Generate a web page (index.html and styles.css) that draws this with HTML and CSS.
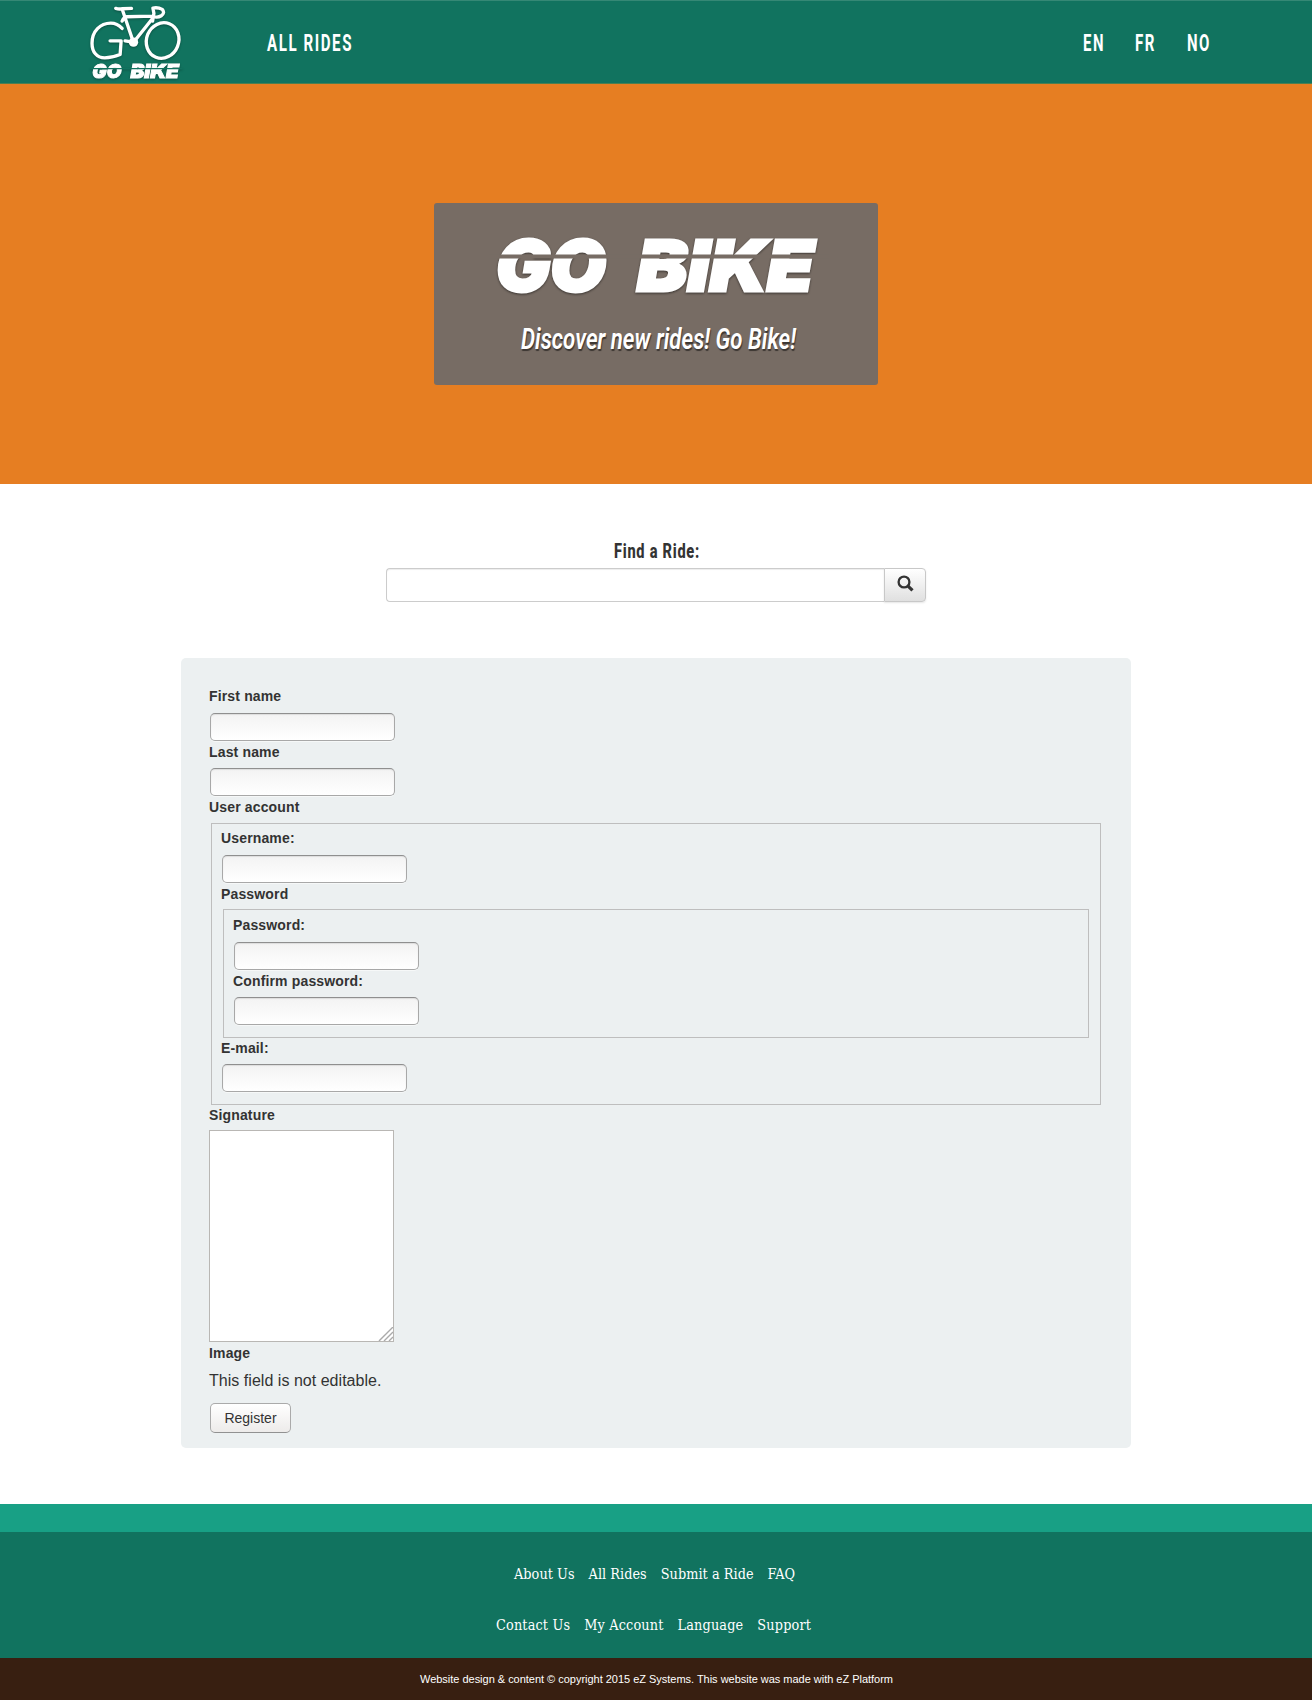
FILE: index.html
```html
<!DOCTYPE html>
<html lang="en">
<head>
<meta charset="utf-8">
<title>Go Bike</title>
<link rel="stylesheet" href="styles.css">
</head>
<body>
<header class="navbar">
  <a class="brand" aria-label="Go Bike">
    <svg class="logo" viewBox="50 10 290 230">
      <g class="logo-lines">
        <path d="M155 83C145 72 133 67 121 67C90 67 65 91 65 127C65 153 79 171 103 171C121 171 137 166 149 161L152 120L119 120"/>
        <ellipse cx="276" cy="119" rx="48" ry="54" transform="rotate(22 276 119)"/>
        <path d="M136 23Q145 26 156 24L183 23M155 25L188 122M155 61Q160 49 169 48L246 46M191 122L250 48M246 61L250 38L247 22Q262 19 275 26Q284 37 272 45Q264 50 256 49M164 120L183 123" />
      </g>
      <circle class="logo-fill" cx="189" cy="124" r="14"/>
      <g class="logo-word">
        <text x="66" y="230" textLength="87" lengthAdjust="spacingAndGlyphs">GO</text>
        <text x="180" y="230" textLength="145" lengthAdjust="spacingAndGlyphs">BIKE</text>
      </g>
      <path class="logo-cut" d="M60 203H335"/>
    </svg>
  </a>
  <nav class="main-nav"><a><svg class="cond" width="92" height="32"><text x="0" y="24" textLength="86" lengthAdjust="spacingAndGlyphs">ALL RIDES</text></svg></a></nav>
  <nav class="lang-nav">
    <a><svg class="cond" width="22" height="32"><text x="0" y="24" textLength="22" lengthAdjust="spacingAndGlyphs">EN</text></svg></a>
    <a><svg class="cond" width="22" height="32"><text x="0" y="24" textLength="21" lengthAdjust="spacingAndGlyphs">FR</text></svg></a>
    <a><svg class="cond" width="24" height="32"><text x="0" y="24" textLength="24" lengthAdjust="spacingAndGlyphs">NO</text></svg></a>
  </nav>
</header>

<section class="hero">
  <div class="hero-card">
    <svg class="hero-title" width="444" height="182">
      <g class="hero-word">
        <text x="62" y="87.500" textLength="110" lengthAdjust="spacingAndGlyphs">GO</text>
        <text x="203" y="87.500" textLength="177" lengthAdjust="spacingAndGlyphs">BIKE</text>
      </g>
      <path class="hero-cut" d="M55 53.5H395"/>
      <text class="hero-tag" x="87" y="146" textLength="275" lengthAdjust="spacingAndGlyphs">Discover new rides! Go Bike!</text>
    </svg>
  </div>
</section>

<main>
  <form class="search">
    <svg class="search-label" width="86" height="28"><text x="1" y="18" textLength="86" lengthAdjust="spacingAndGlyphs">Find a Ride:</text></svg>
    <div class="search-row">
      <input class="search-input" type="text">
      <button class="search-btn" type="button" aria-label="Search"><svg width="17" height="18" viewBox="0 0 16 17"><circle cx="6.6" cy="6.6" r="5.1"/><path d="M10.4 10.4L14.6 14.6"/></svg></button>
    </div>
  </form>

  <form class="panel">
    <div class="field first"><label>First name</label><input type="text"></div>
    <div class="field"><label>Last name</label><input type="text"></div>
    <label>User account</label>
    <div class="group outer">
      <div class="field first"><label>Username:</label><input type="text"></div>
      <label>Password</label>
      <div class="group inner">
        <div class="field first"><label>Password:</label><input type="password"></div>
        <div class="field last"><label>Confirm password:</label><input type="password"></div>
      </div>
      <div class="field last"><label>E-mail:</label><input type="text"></div>
    </div>
    <label>Signature</label>
    <div class="area"><svg width="15" height="14" viewBox="0 0 15 14"><path d="M1 14L15 0M6 14L15 5M11 14L15 10"/></svg></div>
    <label>Image</label>
    <p class="note">This field is not editable.</p>
    <button class="register" type="button">Register</button>
  </form>
</main>

<footer>
  <div class="stripe"></div>
  <div class="links">
    <div class="link-row one"><a>About Us</a><a>All Rides</a><a>Submit a Ride</a><a>FAQ</a></div>
    <div class="link-row two"><a>Contact Us</a><a>My Account</a><a>Language</a><a>Support</a></div>
  </div>
  <div class="copyright">Website design &amp; content © copyright 2015 eZ Systems. This website was made with eZ Platform</div>
</footer>
</body>
</html>
```
FILE: styles.css
```css
* { box-sizing: border-box; }
body { margin: 0; background: #fff; color: #333; font: 16px/24px "Liberation Sans", Arial, sans-serif; }
svg { display: block; overflow: visible; }

.navbar { display: flex; align-items: flex-start; height: 84px; padding: 2px 101px 0 87px; background: #11735f; border-top: 1px solid #358875; border-bottom: 1px solid #4c7e50; }
.brand { margin-top: 1px; }
.logo { width: 97px; height: 77px; filter: drop-shadow(0 1px 1px rgba(0,0,0,.3)); }
.logo-lines { fill: none; stroke: #fff; stroke-width: 10; stroke-linecap: round; stroke-linejoin: round; }
.logo-fill { fill: #fff; }
.logo-word { fill: #fff; stroke: #fff; stroke-width: 3; font: italic 900 58px Inter, sans-serif; }
.logo-cut { stroke: #11735f; stroke-width: 3.5; }
.main-nav { margin: 24px auto 0 83px; }
.lang-nav { display: flex; gap: 30px; margin-top: 24px; }
.cond { fill: #fff; font: 700 24px Roboto, sans-serif; letter-spacing: 2.5px; }

.hero { display: flex; justify-content: center; height: 400px; padding-top: 119px; background: #e67e22; }
.hero-card { width: 444px; height: 182px; border-radius: 3px; background: #776c64; }
.hero-word { fill: #fff; stroke: #fff; stroke-width: 3; font: italic 900 70px Inter, sans-serif; filter: drop-shadow(0 1px 1px rgba(0,0,0,.5)); }
.hero-cut { stroke: #776c64; stroke-width: 4; }
.hero-tag { fill: #fff; font: italic 600 30px Roboto, sans-serif; text-shadow: 1px 2px 1px rgba(0,0,0,.5); }

.search { width: 540px; margin: 0 auto; padding-top: 56px; }
.search-label { margin: 0 auto; fill: #333; font: 800 20px Roboto, sans-serif; letter-spacing: 1px; }
.search-row { display: flex; height: 34px; }
.search-input { flex: 1; min-width: 0; border: 1px solid #ccc; border-right: 0; border-radius: 4px 0 0 4px; background: #fff; box-shadow: inset 0 1px 1px rgba(0,0,0,.075); }
.search-btn { display: flex; justify-content: center; align-items: flex-start; width: 42px; padding: 6px 0 0; border: 1px solid #c8c8c8; border-radius: 0 4px 4px 0; background: linear-gradient(#fff, #e0e0e0); box-shadow: 0 1px 2px rgba(0,0,0,.1); }
.search-btn svg { fill: none; stroke: #333; stroke-width: 2.2; }
.search-btn path { stroke-width: 3; }

.panel { width: 950px; height: 790px; margin: 56px auto; padding: 28px; border-radius: 5px; background: #ecf0f1; }
label { display: block; height: 20px; font-size: 14px; font-weight: 700; line-height: 20px; letter-spacing: .15px; }
.field input { display: block; width: 185px; height: 28px; margin: 6px 0 1px 1px; border: 1px solid #a8a8a8; border-top-color: #8f8f8f; border-radius: 5px; background: linear-gradient(#f3f3f3, #fff); box-shadow: inset 0 1px 1px #ddd, 0 1px 0 #f6f8f8; }
.field.first input { margin-top: 7px; }
.field.last input { margin-bottom: 0; }
.group { border: 1px solid #bebebe; }
.outer { margin: 6px 2px 0; padding: 4px 11px 12px 9px; }
.inner { margin: 5px 0 0 2px; padding: 5px 9px 12px; }
.area { display: flex; justify-content: flex-end; align-items: flex-end; width: 185px; height: 212px; margin: 5px 0 1px; border: 1px solid #b9b7b4; background: #fff; }
.area svg { fill: none; stroke: #aaa; stroke-width: 1.4; overflow: hidden; }
.note { margin: 6px 0 10px; letter-spacing: .03px; }
.register { display: block; width: 81px; height: 30px; margin-left: 1px; padding: 0; border: 1px solid #aaa; border-bottom-color: #919191; border-radius: 5px; background: linear-gradient(#fff, #edebea); color: #333; font: 14px "Liberation Sans", Arial, sans-serif; }

.stripe { height: 28px; background: #18a085; }
.links { height: 126px; padding-top: 32px; background: #11735f; }
.link-row { display: flex; gap: 14px; height: 20px; margin: 0 auto; color: #fff; font: 14.3px/20px "DejaVu Serif Condensed", "DejaVu Serif", serif; font-stretch: condensed; white-space: nowrap; }
.one { width: 284px; margin-bottom: 31px; letter-spacing: .04px; }
.two { width: 320px; letter-spacing: .16px; }
.copyright { height: 42px; padding-left: 1px; background: #381f11; color: #fff; font-size: 11px; line-height: 42px; text-align: center; letter-spacing: -.02px; }
```
